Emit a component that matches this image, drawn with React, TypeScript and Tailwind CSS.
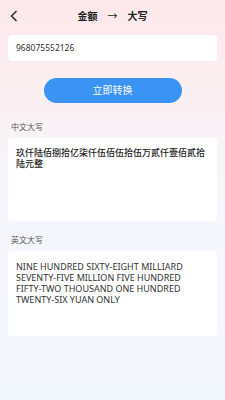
import React from 'react';

export default function App() {
  const font = { fontFamily: '"Noto Sans", "Noto Sans CJK SC", sans-serif' };
  return (
    <div
      className="w-[225px] h-[400px] overflow-hidden bg-gradient-to-b from-[#fde8ea] via-[#f6f7fc] to-[#f3f8fd] flex flex-col"
      style={font}
    >
      {/* Header */}
      <div className="relative h-[32px] flex items-center justify-center shrink-0">
        <svg className="absolute left-[10px] top-[10px]" width="8" height="12" viewBox="0 0 8 12">
          <path d="M6.5 1 L1.5 6 L6.5 11" fill="none" stroke="#222" strokeWidth="1.4" />
        </svg>
        <div className="flex items-center gap-[10px] text-[10px] font-bold text-[#222] leading-none">
          <span>金额</span>
          <span className="font-normal">→</span>
          <span>大写</span>
        </div>
      </div>

      {/* Input */}
      <div className="mx-[8px] mt-[3px] h-[26px] bg-white rounded-[4px] flex items-center px-[8px] text-[8.5px] text-[#333]">
        968075552126
      </div>

      {/* Button */}
      <div className="flex justify-center mt-[17px]">
        <button className="w-[138px] h-[25px] rounded-full bg-[#3a93f2] text-white text-[10px]">
          立即转换
        </button>
      </div>

      {/* Chinese */}
      <div className="mt-[20px] ml-[11px] text-[8px] text-[#555] leading-none">中文大写</div>
      <div className="mx-[8px] mt-[7px] h-[83px] bg-white rounded-[4px] pl-[8px] pr-[4px] pt-[9px] text-[9px] font-medium text-[#222] leading-[11px]">
        玖仟陆佰捌拾亿柒仟伍佰伍拾伍万贰仟壹佰贰拾陆元整
      </div>

      {/* English */}
      <div className="mt-[15px] ml-[11px] text-[8px] text-[#555] leading-none">英文大写</div>
      <div className="mx-[8px] mt-[7px] h-[85px] bg-white rounded-[4px] pl-[8px] pr-[16px] pt-[10px] text-[9px] text-[#333] leading-[11px]">
        NINE HUNDRED SIXTY-EIGHT MILLIARD SEVENTY-FIVE MILLION FIVE HUNDRED FIFTY-TWO THOUSAND ONE HUNDRED TWENTY-SIX YUAN ONLY
      </div>
    </div>
  );
}
